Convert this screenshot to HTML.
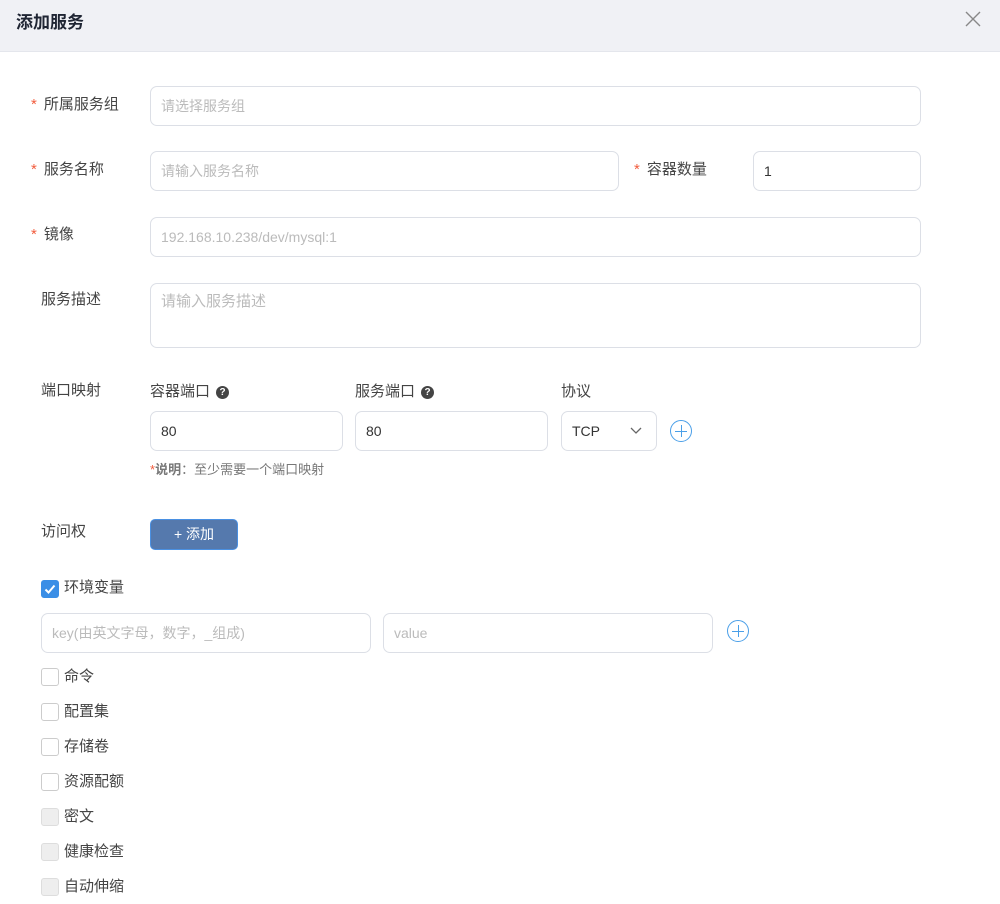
<!DOCTYPE html>
<html><head><meta charset="utf-8"><style>
*{box-sizing:border-box;margin:0;padding:0}
body{width:1000px;height:904px;background:#fff;font-family:"Liberation Sans","Noto Sans CJK SC",sans-serif;position:relative;overflow:hidden;color:#333}
.hd{position:absolute;left:0;top:0;width:1000px;height:52px;background:#f0f1f5;border-bottom:1px solid #e4e6ec}
.hd .t{position:absolute;left:16px;top:8px;font-size:17px;font-weight:bold;color:#1f2533}
.x{position:absolute;left:963px;top:9px;width:20px;height:20px}
.a{position:absolute;font-size:15px;color:#444;line-height:20px}
.s{color:#f25c3d;margin-right:7px}
.in{position:absolute;border:1px solid #dcdfe6;border-radius:7px;height:40px;font-size:14px;color:#bbb;padding:0 10px;line-height:38px}
.v{color:#333}
.pl{position:absolute;width:22px;height:22px;border:1px solid #4a9fe8;border-radius:50%}
.pl:before{content:"";position:absolute;left:4px;top:10px;width:12px;height:1px;background:#4a9fe8}
.pl:after{content:"";position:absolute;left:10px;top:4px;width:1px;height:12px;background:#4a9fe8}
.cb{position:absolute;left:41px;width:18px;height:18px;border:1px solid #ccc;border-radius:3px;background:#fff}
.cb.d{background:#eee;border-color:#ddd}
.q{display:inline-block;width:13px;height:13px;border-radius:50%;background:#444;color:#fff;font-size:10px;line-height:13px;text-align:center;font-weight:bold;margin-left:6px;vertical-align:1px}
</style></head><body>
<div class="hd"><div class="t">添加服务</div>
<svg class="x" viewBox="0 0 20 20"><path d="M3 3L17 17M17 3L3 17" stroke="#888" stroke-width="1.4"/></svg></div>

<div class="a" style="left:31px;top:95px"><span class="s">*</span>所属服务组</div>
<div class="in" style="left:150px;top:86px;width:771px">请选择服务组</div>

<div class="a" style="left:31px;top:160px"><span class="s">*</span>服务名称</div>
<div class="in" style="left:150px;top:151px;width:469px">请输入服务名称</div>
<div class="a" style="left:634px;top:160px"><span class="s">*</span>容器数量</div>
<div class="in v" style="left:753px;top:151px;width:168px">1</div>

<div class="a" style="left:31px;top:225px"><span class="s">*</span>镜像</div>
<div class="in" style="left:150px;top:217px;width:771px">192.168.10.238/dev/mysql:1</div>

<div class="a" style="left:41px;top:290px">服务描述</div>
<div class="in" style="left:150px;top:283px;width:771px;height:65px;font-size:15px;line-height:36px">请输入服务描述</div>

<div class="a" style="left:41px;top:381px">端口映射</div>
<div class="a" style="left:150px;top:382px">容器端口<span class="q">?</span></div>
<div class="a" style="left:355px;top:382px">服务端口<span class="q">?</span></div>
<div class="a" style="left:561px;top:382px">协议</div>
<div class="in v" style="left:150px;top:411px;width:193px">80</div>
<div class="in v" style="left:355px;top:411px;width:193px">80</div>
<div class="in v" style="left:561px;top:411px;width:96px">TCP<svg style="position:absolute;left:68px;top:15px" width="12" height="8" viewBox="0 0 12 8"><path d="M1 1L6 6L11 1" fill="none" stroke="#666" stroke-width="1.3"/></svg></div>
<div class="pl" style="left:670px;top:420px"></div>
<div class="a" style="left:150px;top:460px;font-size:13px;color:#777"><span style="color:#f25c3d">*</span><b>说明</b>：至少需要一个端口映射</div>

<div class="a" style="left:41px;top:522px">访问权</div>
<div style="position:absolute;left:150px;top:519px;width:88px;height:31px;background:#5579ad;border:1px solid #4a90e2;border-radius:5px;color:#fff;font-size:14px;line-height:29px;text-align:center">+ 添加</div>

<div class="cb" style="top:580px;background:#3a8ee6;border-color:#3a8ee6"><svg width="16" height="16" viewBox="0 0 16 16" style="position:absolute;left:0;top:0"><path d="M3.5 8.5L6.5 11.5L12.5 4.5" fill="none" stroke="#fff" stroke-width="2"/></svg></div>
<div class="a" style="left:64px;top:578px;font-size:15px">环境变量</div>
<div class="in" style="left:41px;top:613px;width:330px">key(由英文字母，数字，_组成)</div>
<div class="in" style="left:383px;top:613px;width:330px">value</div>
<div class="pl" style="left:727px;top:620px"></div>

<div class="cb" style="top:668px"></div><div class="a" style="left:64px;top:667px;font-size:15px">命令</div>
<div class="cb" style="top:703px"></div><div class="a" style="left:64px;top:702px;font-size:15px">配置集</div>
<div class="cb" style="top:738px"></div><div class="a" style="left:64px;top:737px;font-size:15px">存储卷</div>
<div class="cb" style="top:773px"></div><div class="a" style="left:64px;top:772px;font-size:15px">资源配额</div>
<div class="cb d" style="top:808px"></div><div class="a" style="left:64px;top:807px;font-size:15px">密文</div>
<div class="cb d" style="top:843px"></div><div class="a" style="left:64px;top:842px;font-size:15px">健康检查</div>
<div class="cb d" style="top:878px"></div><div class="a" style="left:64px;top:877px;font-size:15px">自动伸缩</div>
</body></html>
